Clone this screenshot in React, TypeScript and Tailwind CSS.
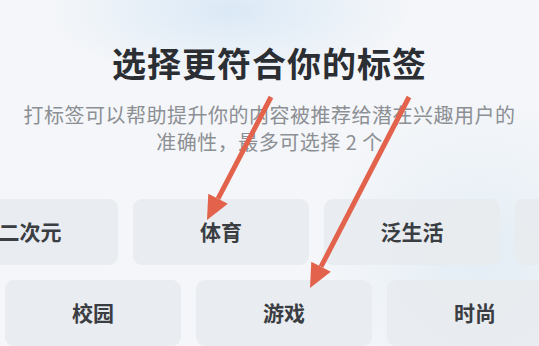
const ROW_ONE = ['二次元', '体育', '泛生活', ''];
const ROW_TWO = ['校园', '游戏', '时尚'];

const Tag = ({ label }: { label: string }) => (
  <div className="flex h-[66px] w-[176px] shrink-0 items-center justify-center rounded-[9px] bg-[#e8ebee]/90 text-[21px] font-semibold text-[#3a3d42]">
    {label}
  </div>
);

const Arrow = ({ x1, y1, x2, y2 }: { x1: number; y1: number; x2: number; y2: number }) => {
  const a = Math.atan2(y2 - y1, x2 - x1);
  const len = 24;
  const half = 11;
  const bx = x2 - len * Math.cos(a);
  const by = y2 - len * Math.sin(a);
  const px = -Math.sin(a) * half;
  const py = Math.cos(a) * half;
  return (
    <g>
      <line x1={x1} y1={y1} x2={bx} y2={by} stroke="#e2624c" strokeWidth={5} />
      <polygon points={`${x2},${y2} ${bx + px},${by + py} ${bx - px},${by - py}`} fill="#e2624c" />
    </g>
  );
};

export default function App() {
  return (
    <div
      className="relative h-[346px] w-[539px] overflow-hidden bg-[#f4f6f9] bg-[radial-gradient(ellipse_180px_70px_at_230px_10px,#dbe9f6,transparent),radial-gradient(ellipse_160px_160px_at_480px_260px,#e3edf5,transparent)]"
      style={{ fontFamily: '"Noto Sans CJK SC", "Noto Sans", sans-serif' }}
    >
      <div className="flex flex-col items-center pt-[42px]">
        <h1 className="text-[34px] font-bold leading-[42px] tracking-[1px] text-[#2b2e33]">选择更符合你的标签</h1>
        <p className="mt-[17px] w-[530px] text-center text-[20px] leading-[27px] tracking-[0.5px] text-[#8c8f94]">
          打标签可以帮助提升你的内容被推荐给潜在兴趣用户的
          <br />
          准确性，最多可选择 2 个
        </p>
      </div>

      <div className="mt-[44px] flex flex-col gap-[15px]">
        <div className="ml-[-58px] flex gap-[15px]">
          {ROW_ONE.map((t, i) => (
            <Tag key={i} label={t} />
          ))}
        </div>
        <div className="ml-[5px] flex gap-[15px]">
          {ROW_TWO.map((t) => (
            <Tag key={t} label={t} />
          ))}
        </div>
      </div>

      <svg className="absolute left-0 top-0" width={539} height={346}>
        <Arrow x1={271} y1={97} x2={207} y2={220} />
        <Arrow x1={409} y1={97} x2={310} y2={288} />
      </svg>
    </div>
  );
}
